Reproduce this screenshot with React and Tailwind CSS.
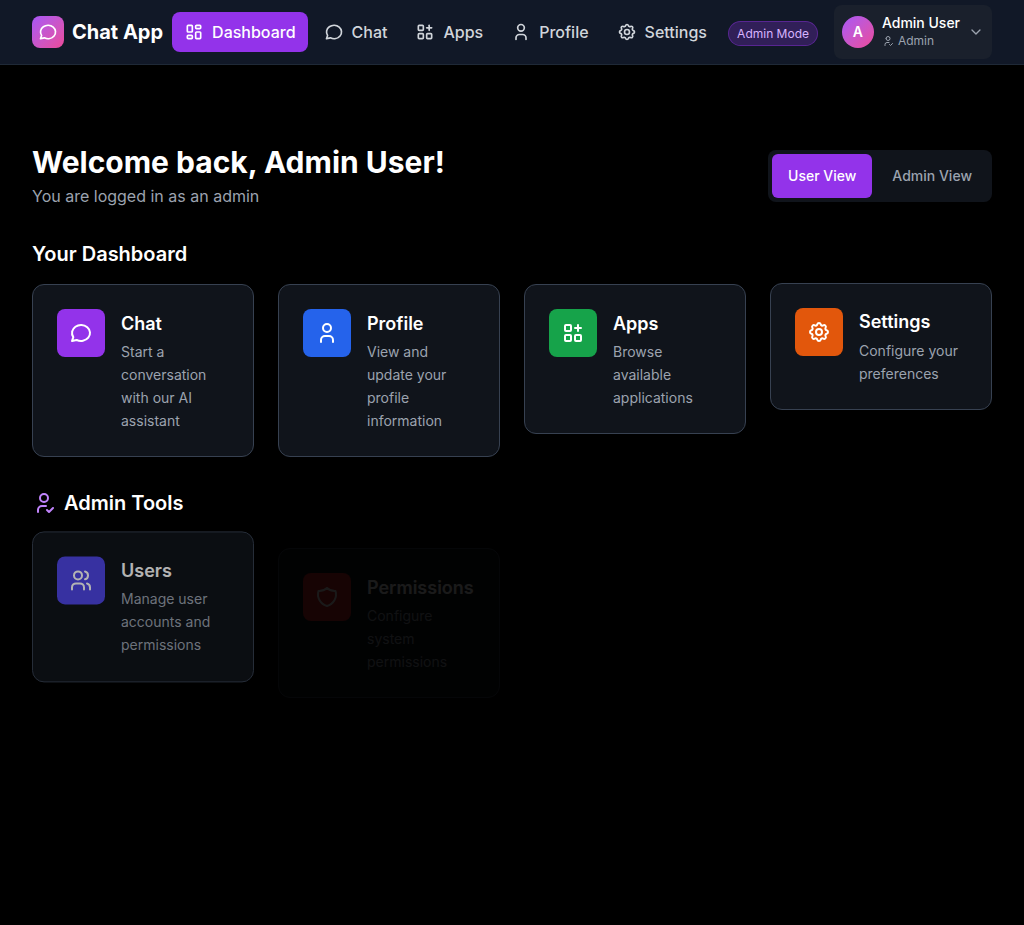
import {
  TbApps,
  TbChevronDown,
  TbLayoutDashboard,
  TbMessageCircle,
  TbSettings,
  TbShield,
  TbUser,
  TbUserCheck,
  TbUsers,
} from "react-icons/tb";
import clsx from "clsx";

const navItems = [
  { label: "Dashboard", icon: TbLayoutDashboard, active: true },
  { label: "Chat", icon: TbMessageCircle },
  { label: "Apps", icon: TbApps },
  { label: "Profile", icon: TbUser },
  { label: "Settings", icon: TbSettings },
];

const dashboardCards = [
  { title: "Chat", text: "Start a conversation with our AI assistant", icon: TbMessageCircle, color: "bg-[#9333ea]" },
  { title: "Profile", text: "View and update your profile information", icon: TbUser, color: "bg-[#2563eb]" },
  { title: "Apps", text: "Browse available applications", icon: TbApps, color: "bg-[#16a34a]" },
  { title: "Settings", text: "Configure your preferences", icon: TbSettings, color: "bg-[#e2570c]", className: "-translate-y-px pb-[24.4px]", titleClassName: "mb-[3px] leading-7" },
];

const adminCards = [
  { title: "Users", text: "Manage user accounts and permissions", icon: TbUsers, color: "bg-[#4f46e5]", className: "opacity-70 translate-y-[2.4px] pb-[24.6px]" },
  { title: "Permissions", text: "Configure system permissions", icon: TbShield, color: "bg-[#dc2626]", className: "opacity-10 translate-y-[19px] pb-6" },
];

function Header() {
  return (
    <header className="flex h-[65px] items-center border-b border-[#1f2937] bg-[#111827] px-8">
      <div className="flex items-center gap-2">
        <div className="flex size-8 items-center justify-center rounded-lg bg-linear-to-br from-[#a855f7] to-[#ec4899]">
          <TbMessageCircle className="size-5" />
        </div>
        <span className="w-[92.1px] whitespace-nowrap text-xl font-bold">Chat App</span>
      </div>
      <nav className="ml-2 flex items-center gap-1">
        {navItems.map(({ label, icon: Icon, active }) => (
          <a
            key={label}
            className={clsx(
              "flex h-10 items-center gap-2 rounded-lg px-3 font-medium",
              active ? "bg-[#9333ea] text-white" : "text-[#d1d5db]",
            )}
          >
            <Icon className="size-5" />
            {label}
          </a>
        ))}
      </nav>
      <div className="ml-auto flex items-center gap-4">
        <span className="mt-0.5 rounded-full border border-[#9333ea]/40 bg-[#9333ea]/25 px-2 py-[3px] text-xs leading-[17px] whitespace-nowrap text-[#d8b4fe]">
          Admin Mode
        </span>
        <button className="flex h-[54px] w-[158px] items-center gap-2 rounded-lg bg-[#1a202c] px-2 text-left">
          <span className="flex size-8 items-center justify-center rounded-full bg-linear-to-br from-[#a855f7] to-[#ec4899] text-sm font-semibold">
            A
          </span>
          <span className="flex flex-col pb-0.5">
            <span className="text-sm leading-5 font-medium whitespace-nowrap">Admin User</span>
            <span className="flex items-center gap-1 text-xs leading-4 text-[#9ca3af]">
              <TbUserCheck className="size-3" />
              Admin
            </span>
          </span>
          <TbChevronDown className="ml-auto size-4 text-[#9ca3af]" />
        </button>
      </div>
    </header>
  );
}

function Card({ title, text, icon: Icon, color, className = "pb-6", titleClassName = "mb-px leading-[30px]" }) {
  return (
    <article className={clsx("flex items-start gap-4 self-start rounded-xl border border-[#374151] bg-[#10141b] px-6 pt-6", className)}>
      <div className={clsx("flex size-12 shrink-0 items-center justify-center rounded-lg", color)}>
        <Icon className="size-6" />
      </div>
      <div className="min-w-0">
        <h3 className={clsx("text-lg font-semibold", titleClassName)}>{title}</h3>
        <p className="text-sm leading-[23px] text-[#9ca3af]">{text}</p>
      </div>
    </article>
  );
}

export default function App() {
  return (
    <div className="h-[925px] overflow-hidden bg-black font-[Inter,sans-serif] text-white">
      <Header />
      <main className="px-8 pt-[79px]">
        <div className="flex items-center justify-between">
          <div>
            <h1 className="text-3xl leading-9 font-bold">Welcome back, Admin User!</h1>
            <p className="mt-1 text-base leading-6 text-[#9ca3af]">You are logged in as an admin</p>
          </div>
          <div className="flex gap-1 rounded-lg bg-[#10141b] p-1 text-sm font-medium">
            <button className="h-11 rounded-md bg-[#9333ea] px-4">User View</button>
            <button className="h-11 rounded-md px-4 text-[#9ca3af]">Admin View</button>
          </div>
        </div>
        <h2 className="mt-8 text-xl leading-7 font-semibold">Your Dashboard</h2>
        <section className="mt-4 grid grid-cols-4 gap-6">
          {dashboardCards.map((card) => (
            <Card key={card.title} {...card} />
          ))}
        </section>
        <h2 className="mt-8 flex items-center gap-2 text-xl leading-7 font-semibold">
          <TbUserCheck className="size-6 text-[#c084fc]" />
          Admin Tools
        </h2>
        <section className="mt-3 grid grid-cols-4 gap-6">
          {adminCards.map((card) => (
            <Card key={card.title} {...card} />
          ))}
        </section>
      </main>
    </div>
  );
}
